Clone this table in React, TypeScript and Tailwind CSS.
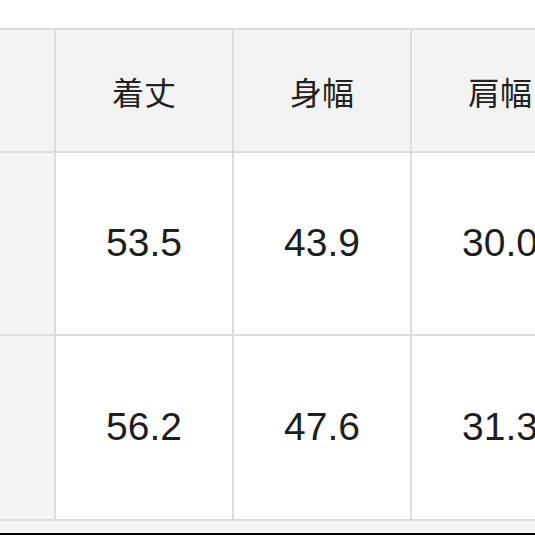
import React from "react";

const headers = ["着丈", "身幅", "肩幅"];
const rows = [
  ["53.5", "43.9", "30.0"],
  ["56.2", "47.6", "31.3"],
];

export default function App() {
  return (
    <div className="w-[535px] h-[535px] overflow-hidden bg-white flex flex-col">
      <div className="h-[28px] shrink-0 bg-white" />
      <div
        className="grid shrink-0 grid-cols-[54px_176px_176px_176px] grid-rows-[121px_181px_183px] gap-[2px] py-[2px] bg-[#dddddd] w-[600px]"
        style={{ fontFamily: '"Liberation Sans", Arial, "Noto Sans CJK JP", sans-serif' }}
      >
        <div className="bg-[#f3f3f3]" />
        {headers.map((h) => (
          <div
            key={h}
            className="bg-[#f3f3f3] flex items-center justify-center text-[32px] text-[#222222] whitespace-nowrap"
            style={{ fontFamily: '"Noto Sans CJK JP", sans-serif' }}
          >
            {h}
          </div>
        ))}
        {rows.map((r, i) => (
          <React.Fragment key={i}>
            <div className="bg-[#f5f5f5]" />
            {r.map((v, j) => (
              <div
                key={j}
                className="bg-white flex items-center justify-center text-[39px] text-[#1e1e1e] whitespace-nowrap"
              >
                {v}
              </div>
            ))}
          </React.Fragment>
        ))}
      </div>
      <div className="h-[12px] shrink-0 bg-[#f4f4f4]" />
      <div className="flex-1 bg-black" />
    </div>
  );
}
